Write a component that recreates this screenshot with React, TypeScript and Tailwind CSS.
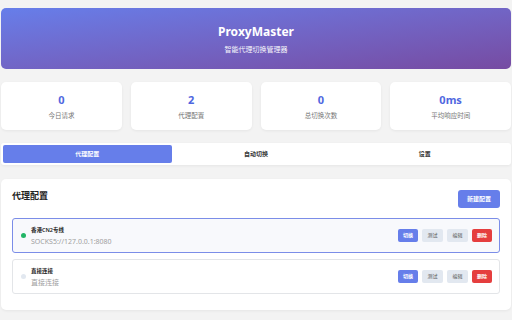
import React from 'react';

const font = { fontFamily: '"Noto Sans", "Noto Sans CJK SC", sans-serif' };

interface Stat {
  value: string;
  label: string;
}

interface Proxy {
  name: string;
  address: string;
  active: boolean;
}

const stats: Stat[] = [
  { value: '0', label: '今日请求' },
  { value: '2', label: '代理配置' },
  { value: '0', label: '总切换次数' },
  { value: '0ms', label: '平均响应时间' },
];

const proxies: Proxy[] = [
  { name: '香港CN2专线', address: 'SOCKS5://127.0.0.1:8080', active: true },
  { name: '直接连接', address: '直接连接', active: false },
];

const tabs = ['代理配置', '自动切换', '设置'];

function ProxyRow({ proxy }: { proxy: Proxy }) {
  return (
    <div
      className={
        proxy.active
          ? 'flex items-center h-[35px] px-[7px] rounded-[3px] border border-[#7b8de8] bg-[#f8f9fc]'
          : 'flex items-center h-[35px] px-[7px] rounded-[3px] border border-[#e3e5e8] bg-white'
      }
    >
      <span
        className={
          proxy.active
            ? 'w-[5px] h-[5px] rounded-full bg-[#22b566] mr-[5px] ml-[1px]'
            : 'w-[5px] h-[5px] rounded-full bg-[#e2e8f0] mr-[5px] ml-[1px]'
        }
      />
      <div className="flex flex-col flex-1 pt-[1px]">
        <span className="text-[5.5px] font-semibold text-[#222] leading-[8px]">{proxy.name}</span>
        <span className="text-[7px] text-[#a0a0a0] leading-[10px] mt-[3px]">{proxy.address}</span>
      </div>
      <div className="flex gap-[4px]">
        <button className="w-[20px] h-[13px] rounded-[2px] bg-[#667eea] text-white text-[5px] font-semibold">切换</button>
        <button className="w-[21px] h-[13px] rounded-[2px] bg-[#e2e8f0] text-[#555] text-[5px]">测试</button>
        <button className="w-[21px] h-[13px] rounded-[2px] bg-[#e2e8f0] text-[#555] text-[5px]">编辑</button>
        <button className="w-[20px] h-[13px] rounded-[2px] bg-[#e53e3e] text-white text-[5px] font-semibold">删除</button>
      </div>
    </div>
  );
}

export default function App() {
  return (
    <div className="w-[512px] h-[320px] bg-[#f3f3f3] pt-[8px] px-[1px] overflow-hidden" style={font}>
      <div className="h-[61px] rounded-[5px] bg-gradient-to-br from-[#667eea] to-[#764ba2] flex flex-col items-center justify-center text-white">
        <h1 className="text-[12px] font-bold leading-[16px] mt-[1px]">ProxyMaster</h1>
        <p className="text-[7px] mt-[5px] leading-[9px] opacity-95">智能代理切换管理器</p>
      </div>

      <div className="grid grid-cols-4 gap-[9px] mt-[13px]">
        {stats.map((s, i) => (
          <div key={i} className="h-[48px] bg-white rounded-[5px] shadow-[0_1px_3px_rgba(0,0,0,0.06)] flex flex-col items-center justify-center">
            <span className="text-[11px] font-bold text-[#4f67e0] leading-[13px]">{s.value}</span>
            <span className="text-[6.5px] text-[#777] mt-[5px] leading-[9px]">{s.label}</span>
          </div>
        ))}
      </div>

      <div className="mt-[13px] h-[22px] bg-white rounded-[3px] shadow-[0_1px_3px_rgba(0,0,0,0.06)] p-[2px] grid grid-cols-3">
        {tabs.map((t, i) => (
          <div
            key={t}
            className={
              i === 0
                ? 'flex items-center justify-center rounded-[2px] bg-[#667eea] text-white text-[6px] font-semibold'
                : 'flex items-center justify-center text-[#333] text-[6px] font-semibold'
            }
          >
            {t}
          </div>
        ))}
      </div>

      <div className="mt-[14px] h-[131px] bg-white rounded-[5px] shadow-[0_1px_3px_rgba(0,0,0,0.06)] px-[11px] pt-[11px]">
        <div className="flex items-center justify-between h-[18px]">
          <h2 className="text-[9px] font-bold text-[#222] -mt-[7px]">代理配置</h2>
          <button className="w-[42px] h-[18px] rounded-[3px] bg-[#667eea] text-white text-[6px] font-semibold">新建配置</button>
        </div>
        <div className="flex flex-col gap-[6px] mt-[10px]">
          {proxies.map((p) => (
            <ProxyRow key={p.name} proxy={p} />
          ))}
        </div>
      </div>
    </div>
  );
}
